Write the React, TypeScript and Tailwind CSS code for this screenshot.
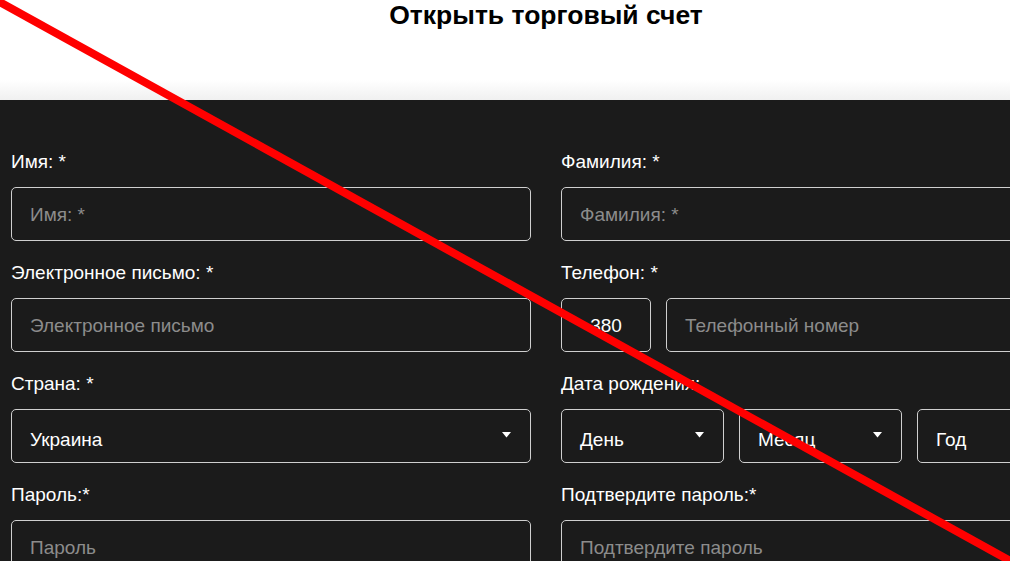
const font = { fontFamily: '"Liberation Sans", Arial, sans-serif' };

function Arrow() {
  return (
    <svg width="9" height="6" viewBox="0 0 9 6" className="absolute right-[19px] top-[22px]">
      <path d="M0 0 L9 0 L4.5 5.5 Z" fill="#ffffff" />
    </svg>
  );
}

function Field({ label, children }: { label: string; children: React.ReactNode }) {
  return (
    <div className="flex flex-col">
      <div className="h-[22px] leading-[22px] text-[19px] text-white mt-[2px] mb-[14px]">{label}</div>
      <div className="mb-[19px]">{children}</div>
    </div>
  );
}

function Box({
  text,
  placeholder,
  select,
  className = "",
  center,
}: {
  text?: string;
  placeholder?: string;
  select?: boolean;
  className?: string;
  center?: boolean;
}) {
  return (
    <div
      className={`relative h-[54px] border border-[#cfcfcf] rounded-[5px] flex items-center text-[19px] ${
        select ? "pt-[8px]" : "pt-[3px]"
      } ${center ? "justify-center" : "px-[18px]"} ${className}`}
    >
      {text ? (
        <span className="text-white">{text}</span>
      ) : (
        <span className="text-[#8c8c8c]">{placeholder}</span>
      )}
      {select && <Arrow />}
    </div>
  );
}

export default function App() {
  return (
    <div className="w-[1010px] h-[561px] overflow-hidden relative bg-white" style={font}>
      <div className="w-[1092px]">
        <div className="h-[100px] bg-gradient-to-b from-white from-80% to-[#f0f0f0]">
          <h1 className="text-center text-[26.5px] font-bold text-black leading-[30px]">
            Открыть торговый счет
          </h1>
        </div>
        <div className="bg-[#1b1b1b] px-[11px] pt-[49px] h-[461px]">
          <div className="grid grid-cols-2 gap-x-[30px]">
            <Field label="Имя: *">
              <Box placeholder="Имя: *" />
            </Field>
            <Field label="Фамилия: *">
              <Box placeholder="Фамилия: *" />
            </Field>
            <Field label="Электронное письмо: *">
              <Box placeholder="Электронное письмо" />
            </Field>
            <Field label="Телефон: *">
              <div className="flex gap-[15px]">
                <Box text="380" center className="w-[90px] shrink-0" />
                <Box placeholder="Телефонный номер" className="flex-1" />
              </div>
            </Field>
            <Field label="Страна: *">
              <Box text="Украина" select />
            </Field>
            <Field label="Дата рождения:">
              <div className="flex gap-[15px]">
                <Box text="День" select className="w-[163px] shrink-0" />
                <Box text="Месяц" select className="w-[163px] shrink-0" />
                <Box text="Год" select className="flex-1" />
              </div>
            </Field>
            <Field label="Пароль:*">
              <Box placeholder="Пароль" />
            </Field>
            <Field label="Подтвердите пароль:*">
              <Box placeholder="Подтвердите пароль" />
            </Field>
          </div>
        </div>
      </div>
      <svg
        className="absolute inset-0 pointer-events-none"
        width="1010"
        height="561"
        viewBox="0 0 1010 561"
      >
        <line x1="-4" y1="0" x2="1014" y2="563" stroke="#ff0000" strokeWidth="8" />
      </svg>
    </div>
  );
}
